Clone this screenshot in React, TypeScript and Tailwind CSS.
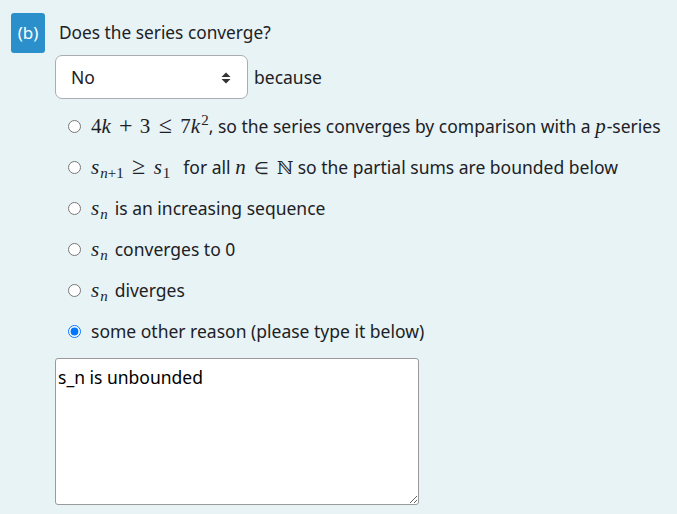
import { ReactNode } from "react";

const M = ({ children }: { children: ReactNode }) => (
  <span className="font-['Liberation_Serif',serif] text-[21px] leading-none whitespace-nowrap">
    {children}
  </span>
);

const I = ({ children }: { children: ReactNode }) => <i className="pr-[1px]">{children}</i>;

// binary op / relation with KaTeX-like spacing
const Op = ({ children, rel }: { children: ReactNode; rel?: boolean }) => (
  <span
    className={`inline-block text-center w-[18px] text-[24px] leading-none ${rel ? "mx-[6px]" : "mx-[5px]"}`}
  >
    {children}
  </span>
);

const Sub = ({ children }: { children: ReactNode }) => (
  <span className="text-[15px] relative top-[4px]">{children}</span>
);

const Sn = () => (
  <M>
    <I>s</I>
    <Sub>
      <i>n</i>
    </Sub>
  </M>
);

interface Option {
  id: string;
  label: ReactNode;
  checked?: boolean;
}

const options: Option[] = [
  {
    id: "a",
    label: (
      <>
        <M>
          4<I>k</I>
          <Op>+</Op>3<Op rel>≤</Op>7<I>k</I>
          <span className="text-[15px] relative -top-[8px]">2</span>
        </M>
        , so the series converges by comparison with a{" "}
        <M>
          <I>p</I>
        </M>
        -series
      </>
    ),
  },
  {
    id: "b",
    label: (
      <>
        <M>
          <I>s</I>
          <Sub>
            <i>n</i>+1
          </Sub>
          <Op rel>≥</Op>
          <I>s</I>
          <Sub>1</Sub>
        </M>
        <span className="ml-[13px]">for all </span>
        <M>
          <I>n</I>
          <Op rel>
            <span className="text-[17px]">∈</span>
          </Op>
          <span className="font-['DejaVu_Serif',serif] text-[18px]">ℕ</span>
        </M>{" "}
        so the partial sums are bounded below
      </>
    ),
  },
  {
    id: "c",
    label: (
      <>
        <Sn />
        <span className="ml-[7px]">is an increasing sequence</span>
      </>
    ),
  },
  {
    id: "d",
    label: (
      <>
        <Sn />
        <span className="ml-[7px]">converges to 0</span>
      </>
    ),
  },
  {
    id: "e",
    label: (
      <>
        <Sn />
        <span className="ml-[7px]">diverges</span>
      </>
    ),
  },
  { id: "f", label: "some other reason (please type it below)", checked: true },
];

export default function App() {
  return (
    <div className="min-h-screen h-[514px] bg-[#e7f3f5] text-[#1d2125] font-['Noto_Sans',sans-serif] text-[17.5px] pt-[13px]">
      <div className="flex items-center pl-[11px]">
        <div className="w-[34px] h-[40px] rounded-[3px] bg-[#2b8fcb] text-white flex items-center justify-center text-[17px]">
          (b)
        </div>
        <div className="ml-[14px] -mt-[1px] text-[17.3px]">Does the series converge?</div>
      </div>

      <div className="pl-[55px]">
        <div className="flex items-center mt-[2px]">
          <div className="relative w-[193px] h-[44px] rounded-[7px] border border-[#a9adb1] bg-white flex items-center pl-[15px]">
            <span>No</span>
            <svg className="absolute right-[16px] top-[16px]" width="10" height="12" viewBox="0 0 10 12">
              <path d="M0.5 5 L5 0.5 L9.5 5 Z" fill="#333" />
              <path d="M0.5 7 L5 11.5 L9.5 7 Z" fill="#333" />
            </svg>
          </div>
          <span className="ml-[6px]">because</span>
        </div>

        <div className="mt-[7px] flex flex-col">
          {options.map((o) => (
            <label key={o.id} className="h-[41px] flex items-center pl-[13px]">
              <input
                type="radio"
                name="reason"
                defaultChecked={o.checked}
                className="w-[13px] h-[13px] m-0 shrink-0"
              />
              <span className="ml-[10px] whitespace-nowrap">{o.label}</span>
            </label>
          ))}
        </div>

        <textarea
          defaultValue="s_n is unbounded"
          className="block mt-[6px] w-[364px] h-[147px] bg-white border border-[#9a9a9a] rounded-[3px] px-[2px] pt-[6px] text-[17.5px] leading-[24px] text-black font-['Noto_Sans',sans-serif] resize"
        />
      </div>
    </div>
  );
}
